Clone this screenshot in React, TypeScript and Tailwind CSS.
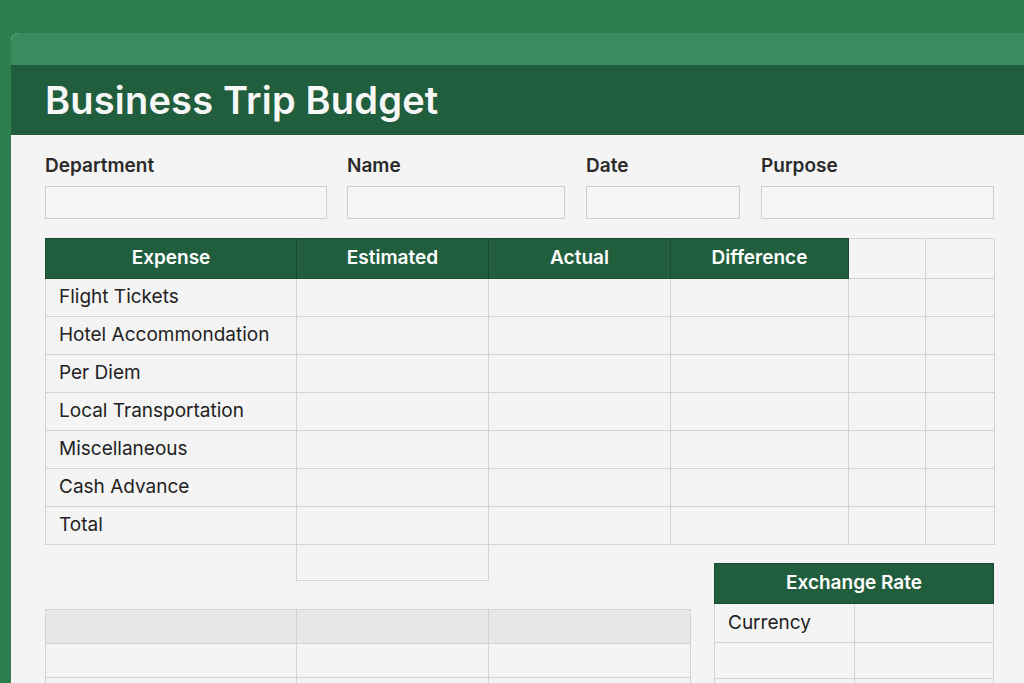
import React from "react";

const font = { fontFamily: "Inter, 'Noto Sans', sans-serif" };

const rows = [
  "Flight Tickets",
  "Hotel Accommondation",
  "Per Diem",
  "Local Transportation",
  "Miscellaneous",
  "Cash Advance",
  "Total",
];

const colWidths = ["w-[251px]", "w-[192px]", "w-[182px]", "w-[178px]", "w-[77px]", "w-[69px]"];

const App = () => {
  return (
    <div className="w-[1024px] h-[683px] overflow-hidden bg-[#2e7d4f] pt-[33px] pl-[11px]" style={font}>
      {/* Card */}
      <div className="h-full rounded-tl-lg overflow-hidden bg-[#f4f4f4]">
        {/* Top strip */}
        <div className="h-[32px] bg-[#3a8c5f]" />
        {/* Title bar */}
        <div className="h-[70px] bg-[#215e3e] pl-[34px] flex items-center">
          <h1 className="text-[38px] font-semibold text-[#f7f7f7] tracking-[0.2px] leading-none">
            Business Trip Budget
          </h1>
        </div>

        {/* Body */}
        <div className="pl-[34px] pt-[19px]">
          {/* Form fields */}
          <div className="flex">
            {[
              { label: "Department", w: "w-[282px]", ml: "ml-0" },
              { label: "Name", w: "w-[218px]", ml: "ml-[20px]" },
              { label: "Date", w: "w-[154px]", ml: "ml-[21px]" },
              { label: "Purpose", w: "w-[233px]", ml: "ml-[21px]" },
            ].map((f) => (
              <div key={f.label} className={`${f.w} ${f.ml} flex flex-col`}>
                <span className="text-[19px] font-semibold text-[#2a2a2a] leading-[24px]">{f.label}</span>
                <div className="mt-[8px] h-[33px] border border-[#cdcdcd] bg-[#f5f5f5]" />
              </div>
            ))}
          </div>

          {/* Main table */}
          <table className="mt-[19px] border-collapse table-fixed w-[949px]">
            <thead>
              <tr className="h-[40px]">
                {["Expense", "Estimated", "Actual", "Difference"].map((h, i) => (
                  <th
                    key={h}
                    className={`${colWidths[i]} bg-[#215e3e] border border-[#1a4a31] text-white text-[19px] font-semibold text-center p-0`}
                  >
                    {h}
                  </th>
                ))}
                <th className={`${colWidths[4]} border border-[#d2d2d2]`} />
                <th className={`${colWidths[5]} border border-[#d2d2d2]`} />
              </tr>
            </thead>
            <tbody>
              {rows.map((r) => (
                <tr key={r} className="h-[38px]">
                  <td className="border border-[#d2d2d2] pl-[13px] text-[19px] text-[#222] p-0">{r}</td>
                  <td className="border border-[#d2d2d2]" />
                  <td className="border border-[#d2d2d2]" />
                  <td className="border border-[#d2d2d2]" />
                  <td className="border border-[#d2d2d2]" />
                  <td className="border border-[#d2d2d2]" />
                </tr>
              ))}
            </tbody>
          </table>

          {/* Lower section */}
          <div className="flex">
            <div className="w-[645px] flex flex-col">
              {/* Extra cell under Estimated */}
              <div className="ml-[251px] w-[193px] h-[36px] border border-t-0 border-[#d2d2d2]" />

              {/* Lower left table */}
              <table className="mt-[28px] border-collapse table-fixed w-[645px]">
                <tbody>
                  <tr className="h-[34px] bg-[#e7e7e7]">
                    <td className="w-[251px] border border-[#d2d2d2]" />
                    <td className="w-[192px] border border-[#d2d2d2]" />
                    <td className="w-[202px] border border-[#d2d2d2]" />
                  </tr>
                  {[0, 1].map((i) => (
                    <tr key={i} className="h-[34px]">
                      <td className="border border-[#d2d2d2]" />
                      <td className="border border-[#d2d2d2]" />
                      <td className="border border-[#d2d2d2]" />
                    </tr>
                  ))}
                </tbody>
              </table>
            </div>

            {/* Exchange rate table */}
            <table className="ml-[24px] mt-[18px] self-start border-collapse table-fixed w-[280px]">
              <thead>
                <tr className="h-[40px]">
                  <th
                    colSpan={2}
                    className="bg-[#215e3e] border border-[#1a4a31] text-white text-[19px] font-semibold text-center p-0"
                  >
                    Exchange Rate
                  </th>
                </tr>
              </thead>
              <tbody>
                <tr className="h-[39px]">
                  <td className="w-[135px] border border-[#d2d2d2] pl-[13px] text-[19px] text-[#222] p-0">Currency</td>
                  <td className="w-[145px] border border-[#d2d2d2]" />
                </tr>
                {[0, 1].map((i) => (
                  <tr key={i} className="h-[36px]">
                    <td className="border border-[#d2d2d2]" />
                    <td className="border border-[#d2d2d2]" />
                  </tr>
                ))}
              </tbody>
            </table>
          </div>
        </div>
      </div>
    </div>
  );
};

export default App;
